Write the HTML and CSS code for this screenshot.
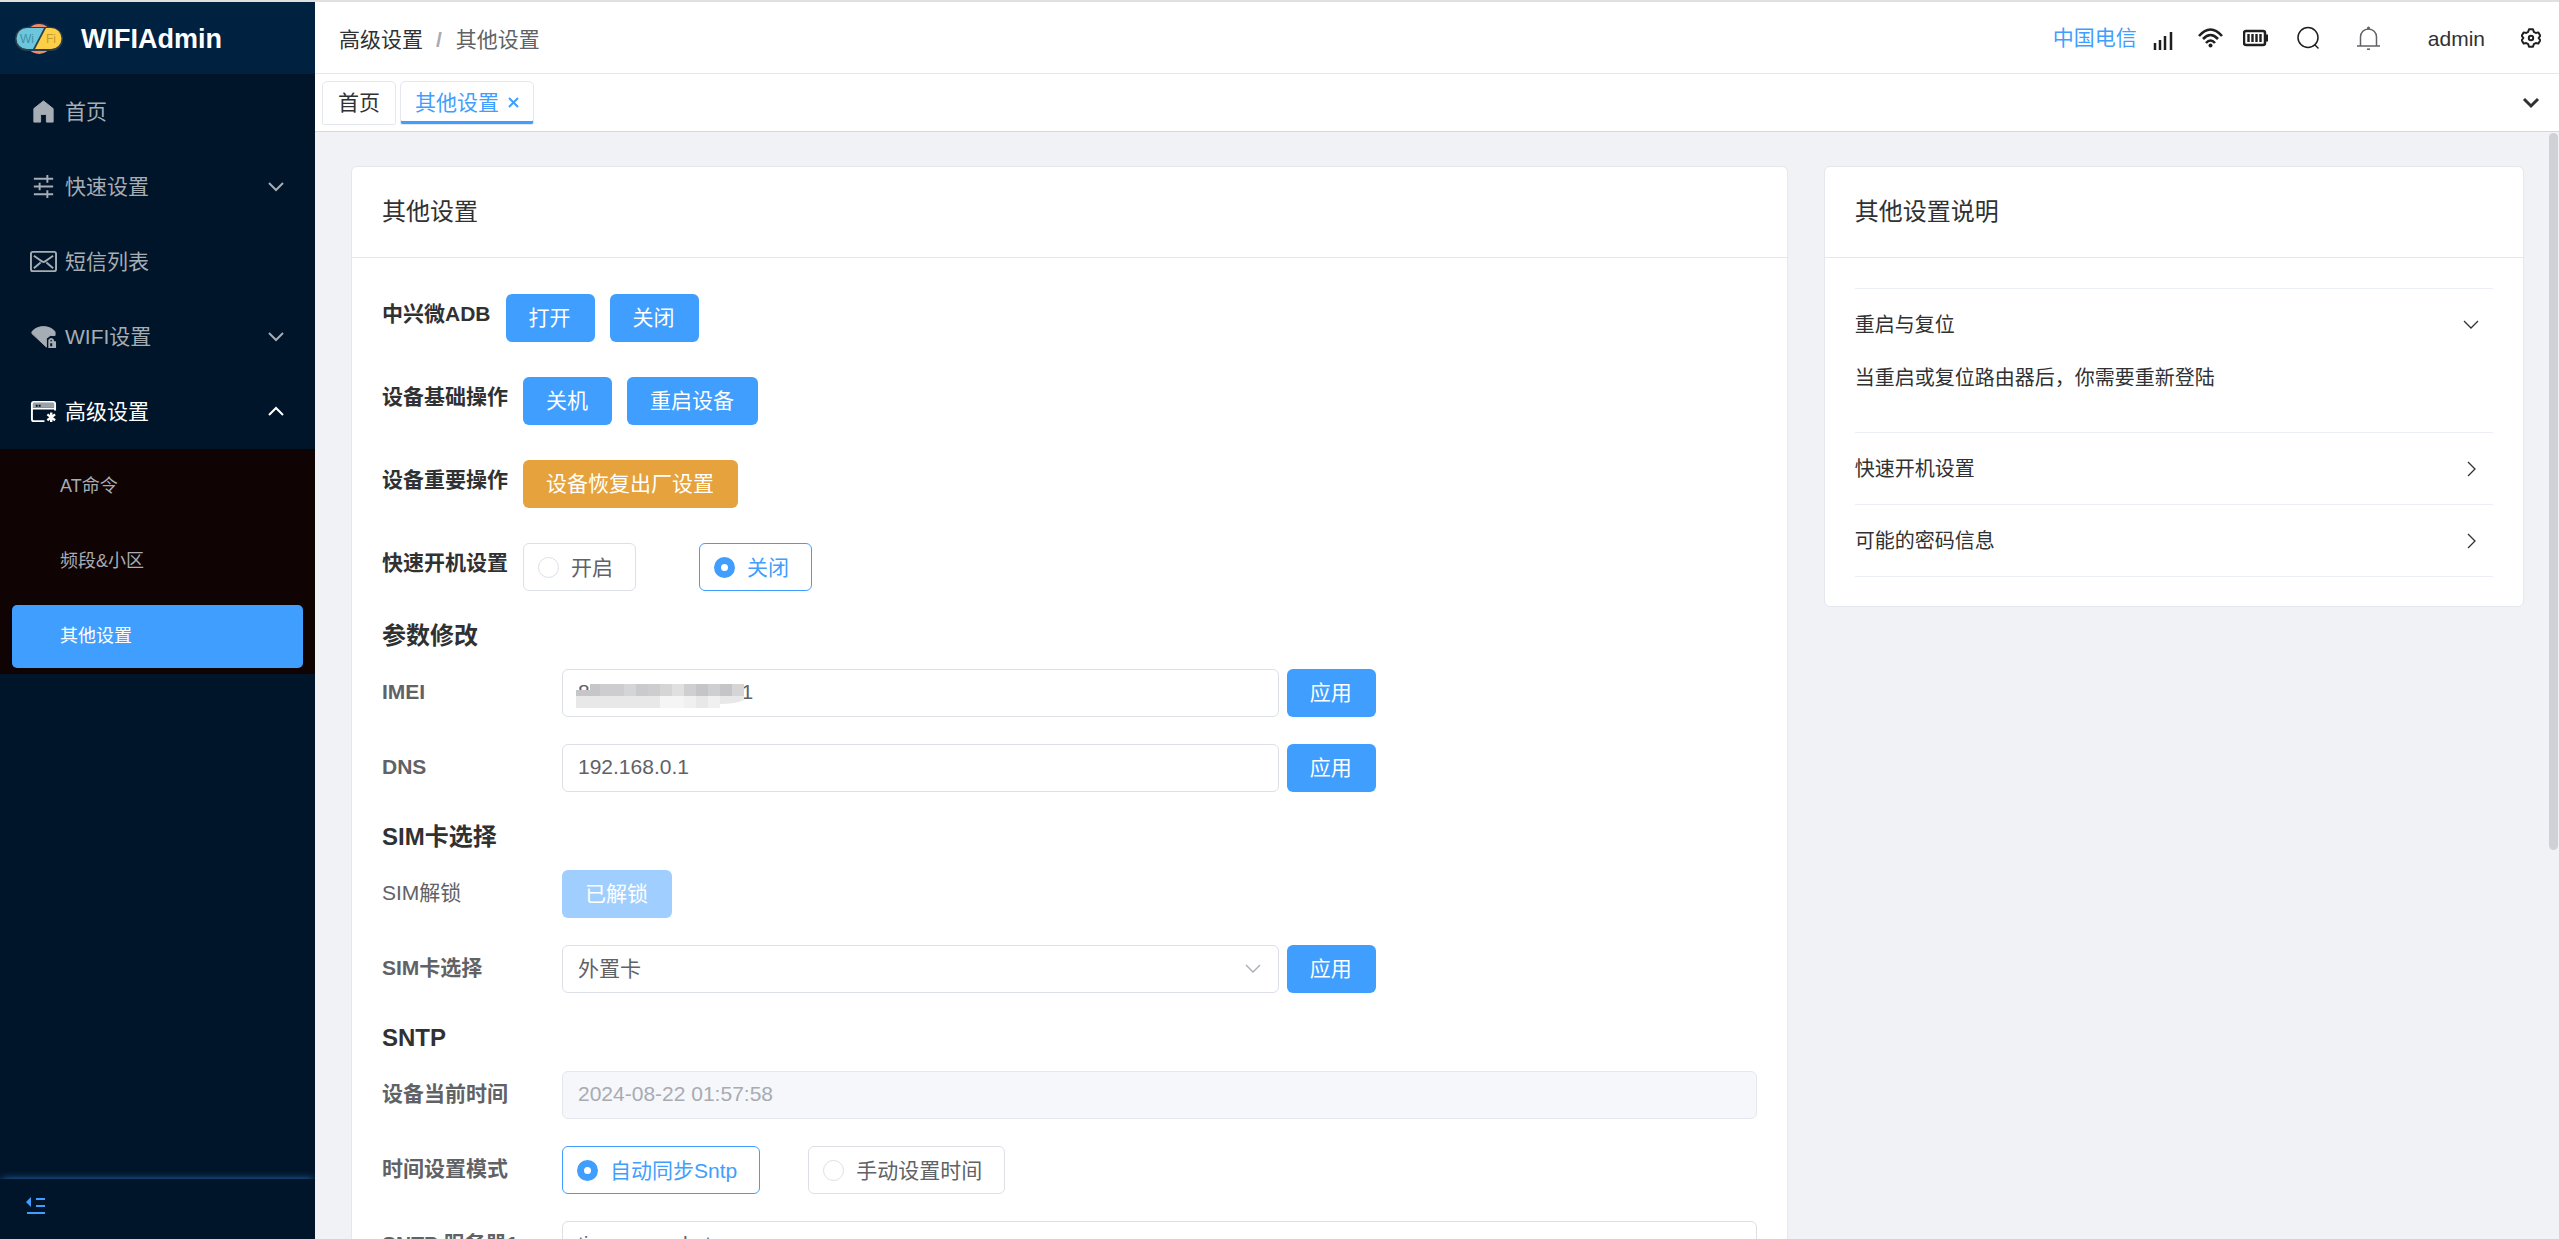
FILE: index.html
```html
<!DOCTYPE html>
<html lang="zh-CN">
<head>
<meta charset="utf-8">
<meta name="viewport" content="width=device-width, initial-scale=1">
<title>其他设置 - WIFIAdmin</title>
<link rel="stylesheet" href="styles.css">
</head>
<body>
<div class="app">
  <aside class="sidebar">
    <a class="brand" href="#">
      <svg class="brand-logo" viewBox="0 0 48 36" aria-hidden="true">
        <path d="M13 8C18 2 30 2 35 8" fill="none" stroke="#0d2f52" stroke-width="2"/>
        <ellipse cx="24" cy="19" rx="14" ry="15" fill="#f08a68"/>
        <rect x="0" y="7" width="48" height="24" rx="12" fill="#2b3f4d"/>
        <path d="M12 8h17L18 29h-6a10.500 10.500 0 0 1 0-21z" fill="#6cc7dd"/>
        <path d="M31 8h5a10.500 10.500 0 0 1 0 21H20z" fill="#fccf47"/>
        <text x="5" y="23" class="logo-wi">Wi</text>
        <text x="31" y="23" class="logo-fi">Fi</text>
      </svg>
      <span class="brand-name">WIFIAdmin</span>
    </a>
    <nav class="menu">
      <a class="menu-item" href="#">
        <svg class="menu-icon" viewBox="0 0 28 28" aria-hidden="true"><path d="M14 3 4 11v14h7v-8h6v8h7V11z" fill="currentColor" stroke="currentColor" stroke-linejoin="round"/></svg>
        <span class="menu-text">首页</span>
      </a>
      <a class="menu-item" href="#">
        <svg class="menu-icon" viewBox="0 0 28 28" aria-hidden="true"><path d="M4 6h20M4 14h20M4 22h20M18 2v8M10 10v8M18 18v8" fill="none" stroke="currentColor" stroke-width="2"/></svg>
        <span class="menu-text">快速设置</span>
        <svg class="menu-arrow" viewBox="0 0 16 16" aria-hidden="true"><path d="m1 4 7 7 7-7"/></svg>
      </a>
      <a class="menu-item" href="#">
        <svg class="menu-icon" viewBox="0 0 28 28" aria-hidden="true"><rect x="1" y="4" width="26" height="20" rx="2" fill="none" stroke="currentColor" stroke-width="2"/><path d="m4 8 7 5q3 3 6 0l7-5M4 21l7-6M24 21l-7-6" fill="none" stroke="currentColor" stroke-width="2"/></svg>
        <span class="menu-text">短信列表</span>
      </a>
      <a class="menu-item" href="#">
        <svg class="menu-icon" viewBox="0 0 28 28" aria-hidden="true"><path d="M2 9C8 2 20 2 26 9v4h-5l-4 3v9L2 11z" fill="currentColor" stroke="currentColor" stroke-linejoin="round"/><path d="M20 20h6v5h-6zM20 20v-2q2-3 4 0v7" fill="none" stroke="currentColor" stroke-width="2"/></svg>
        <span class="menu-text">WIFI设置</span>
        <svg class="menu-arrow" viewBox="0 0 16 16" aria-hidden="true"><path d="m1 4 7 7 7-7"/></svg>
      </a>
      <a class="menu-item menu-item-open" href="#">
        <svg class="menu-icon" viewBox="0 0 28 28" aria-hidden="true"><path d="M3 5h22v5H3z" fill="currentColor" opacity=".6"/><path d="M15 24H4q-2 0-2-2V6q0-2 2-2h20q2 0 2 2v7M2 11h24" fill="none" stroke="currentColor" stroke-width="2"/><path d="M6 8h2M9 8h2" stroke="#001529" stroke-width="2"/><path d="M22 15v10M18 17l8 6M26 17l-8 6" stroke="currentColor" stroke-width="2.500"/></svg>
        <span class="menu-text">高级设置</span>
        <svg class="menu-arrow" viewBox="0 0 16 16" aria-hidden="true"><path d="m1 11 7-7 7 7"/></svg>
      </a>
      <div class="submenu">
        <a class="submenu-item" href="#">AT命令</a>
        <a class="submenu-item" href="#">频段&amp;小区</a>
        <a class="submenu-item submenu-item-active" href="#">其他设置</a>
      </div>
    </nav>
    <div class="sidebar-footer">
      <button class="icon-button" type="button" aria-label="折叠菜单">
        <svg class="collapse-icon" viewBox="0 0 20 18" aria-hidden="true"><path d="M10 2h9M10 9h9M1 16h18" stroke="currentColor" stroke-width="2"/><path d="M5 0v10L0 5z" fill="currentColor"/></svg>
      </button>
    </div>
  </aside>

  <div class="main">
    <header class="topbar">
      <nav class="breadcrumb">
        <a href="#">高级设置</a><span class="breadcrumb-separator">/</span><span>其他设置</span>
      </nav>
      <div class="tools">
        <a class="carrier" href="#">中国电信</a>
        <svg class="tool-icon signal" viewBox="0 0 25 24" aria-hidden="true"><path d="M4 24v-7M9 24V14M14 24V10M20 24V6" stroke="currentColor" stroke-width="2.500"/></svg>
        <svg class="tool-icon wifi" viewBox="0 0 25 24" aria-hidden="true"><path d="M1 10Q12.500-3 24 10M5 13q7.500-8 15 0M8 17q4.500-5 9 0" fill="none" stroke="currentColor" stroke-width="2.600"/><circle cx="12.500" cy="19.500" r="2" fill="currentColor"/></svg>
        <svg class="tool-icon battery" viewBox="0 0 25 24" aria-hidden="true"><rect x="1" y="5" width="21" height="14" rx="2" fill="none" stroke="currentColor" stroke-width="2.500"/><path d="M23 9h2v6h-2z" fill="currentColor" stroke="currentColor"/><path d="M5.500 8v8M9.500 8v8M13.500 8v8M17.500 8v8" stroke="currentColor" stroke-width="2.400"/></svg>
        <button class="icon-button search" type="button" aria-label="搜索">
          <svg class="tool-icon" viewBox="0 0 25 24" aria-hidden="true"><circle cx="12" cy="11.500" r="10" fill="none" stroke="currentColor" stroke-width="1.500"/><path d="m18.500 18.500 4 4" stroke="currentColor" stroke-width="1.500"/></svg>
        </button>
        <button class="icon-button bell" type="button" aria-label="通知">
          <svg class="tool-icon" viewBox="0 0 25 24" aria-hidden="true"><path d="M1 20h23M4.500 20v-9a8 8 0 0 1 16 0v9" fill="none" stroke="currentColor" stroke-width="1.500"/><circle cx="12.500" cy="2" r="1.500" fill="currentColor"/><path d="M11 23.200h3" stroke="currentColor" stroke-width="1.500"/></svg>
        </button>
        <a class="user" href="#">admin</a>
        <button class="icon-button" type="button" aria-label="设置">
          <svg class="gear-icon" viewBox="0 0 20 20" aria-hidden="true"><path d="M8 1.300h4l.8 2.500 2 1.200 2.600-.6 1.900 3.400-1.700 2.200 1.700 2.200-1.900 3.400-2.600-.6-2 1.200-.8 2.500H8l-.8-2.500-2-1.200-2.600.6-1.900-3.400L2.400 10 .7 7.800l1.900-3.400 2.600.6 2-1.200z" fill="none" stroke="currentColor" stroke-width="2" stroke-linejoin="round"/><circle cx="10" cy="10" r="2.200" fill="none" stroke="currentColor" stroke-width="2"/></svg>
        </button>
      </div>
    </header>

    <div class="tabbar">
      <nav class="tabs">
        <a class="tab" href="#"><span class="tab-text">首页</span></a>
        <a class="tab tab-active" href="#"><span class="tab-text">其他设置</span>
          <svg class="tab-close" viewBox="0 0 13 13" aria-hidden="true"><path d="m2 2 9 9M11 2l-9 9"/></svg>
        </a>
      </nav>
      <button class="icon-button" type="button" aria-label="更多标签">
        <svg class="tabs-more" viewBox="0 0 20 20" aria-hidden="true"><path d="m3 6 7 7 7-7"/></svg>
      </button>
    </div>

    <main class="content">
      <div class="columns">
        <div class="column">
          <section class="card">
            <h1 class="card-title">其他设置</h1>
            <div class="card-body">
              <div class="quick-rows">
                <div class="quick-row">
                  <span class="quick-label">中兴微ADB</span>
                  <button class="button" type="button">打开</button>
                  <button class="button" type="button">关闭</button>
                </div>
                <div class="quick-row">
                  <span class="quick-label">设备基础操作</span>
                  <button class="button" type="button">关机</button>
                  <button class="button" type="button">重启设备</button>
                </div>
                <div class="quick-row">
                  <span class="quick-label">设备重要操作</span>
                  <button class="button button-warning" type="button">设备恢复出厂设置</button>
                </div>
                <div class="quick-row">
                  <span class="quick-label">快速开机设置</span>
                  <div class="radio-group radio-group-wide">
                    <label class="radio"><input type="radio" name="fastboot"><span class="radio-text">开启</span></label>
                    <label class="radio"><input type="radio" name="fastboot" checked><span class="radio-text">关闭</span></label>
                  </div>
                </div>
              </div>

              <h2 class="section-title">参数修改</h2>
              <div class="form-rows">
                <div class="form-row">
                  <label class="form-label" for="imei">IMEI</label>
                  <div class="form-control">
                    <div class="input-masked">
                      <input class="input" id="imei" type="text" value="800000000000001">
                      <svg class="mask" viewBox="0 0 168 24" aria-hidden="true">
                        <path d="M0 6h14V0h154v16q-8 4-24 4v4H0z" fill="#e8e8e9"/>
                        <path d="M0 6h14V0h10v12H0z" fill="#c6c6c8"/>
                        <path d="M24 0h24v12H24zM72 0h24v12H72z" fill="#cdcdcf"/>
                        <path d="M48 0h12v12H48z" fill="#d4d5d7"/>
                        <path d="M60 0h12v12H60z" fill="#cacacc"/>
                        <path d="M84 0h12v12H84zM156 0h12v12h-12z" fill="#d5d5d6"/>
                        <path d="M96 0h12v12H96z" fill="#e0e0e1"/>
                        <path d="M108 0h12v12h-12zM132 0h12v12h-12z" fill="#cecfd1"/>
                        <path d="M120 0h12v12h-12zM144 0h12v12h-12z" fill="#c5c5c7"/>
                        <path d="M84 12h24v12H84z" fill="#f5f5f5"/>
                        <path d="M108 12h12v12h-12zM132 12h12v12h-12z" fill="#f0f0f0"/>
                      </svg>
                    </div>
                    <button class="button" type="button">应用</button>
                  </div>
                </div>
                <div class="form-row">
                  <label class="form-label" for="dns">DNS</label>
                  <div class="form-control">
                    <input class="input input-part" id="dns" type="text" value="192.168.0.1">
                    <button class="button" type="button">应用</button>
                  </div>
                </div>
              </div>

              <h2 class="section-title">SIM卡选择</h2>
              <div class="form-rows">
                <div class="form-row">
                  <span class="form-label form-label-light">SIM解锁</span>
                  <div class="form-control"><button class="button" type="button" disabled>已解锁</button></div>
                </div>
                <div class="form-row">
                  <label class="form-label" for="sim">SIM卡选择</label>
                  <div class="form-control">
                    <div class="select-wrap">
                      <select class="input" id="sim"><option>外置卡</option><option>内置卡</option></select>
                      <svg class="select-arrow" viewBox="0 0 20 20" aria-hidden="true"><path d="m3 6 7 7 7-7"/></svg>
                    </div>
                    <button class="button" type="button">应用</button>
                  </div>
                </div>
              </div>

              <h2 class="section-title">SNTP</h2>
              <div class="form-rows">
                <div class="form-row">
                  <label class="form-label" for="now">设备当前时间</label>
                  <div class="form-control"><input class="input" id="now" type="text" value="2024-08-22 01:57:58" disabled></div>
                </div>
                <div class="form-row">
                  <span class="form-label">时间设置模式</span>
                  <div class="form-control radio-group">
                    <label class="radio"><input type="radio" name="timemode" checked><span class="radio-text">自动同步Sntp</span></label>
                    <label class="radio"><input type="radio" name="timemode"><span class="radio-text">手动设置时间</span></label>
                  </div>
                </div>
                <div class="form-row">
                  <label class="form-label" for="sntp1">SNTP 服务器1</label>
                  <div class="form-control"><input class="input" id="sntp1" type="text" value="time.neu.edu.tw"></div>
                </div>
              </div>
            </div>
          </section>
        </div>

        <div class="column">
          <section class="card">
            <h2 class="card-title">其他设置说明</h2>
            <div class="help">
              <div class="help-item">
                <button class="help-header" type="button" aria-expanded="true"><span class="help-title">重启与复位</span>
                  <svg class="help-arrow" viewBox="0 0 20 20" aria-hidden="true"><path d="m3 6 7 7 7-7"/></svg>
                </button>
                <p class="help-text">当重启或复位路由器后，你需要重新登陆</p>
              </div>
              <div class="help-item">
                <button class="help-header" type="button" aria-expanded="false"><span class="help-title">快速开机设置</span>
                  <svg class="help-arrow" viewBox="0 0 20 20" aria-hidden="true"><path d="m7 3 7 7-7 7"/></svg>
                </button>
              </div>
              <div class="help-item">
                <button class="help-header" type="button" aria-expanded="false"><span class="help-title">可能的密码信息</span>
                  <svg class="help-arrow" viewBox="0 0 20 20" aria-hidden="true"><path d="m7 3 7 7-7 7"/></svg>
                </button>
              </div>
            </div>
          </section>
        </div>
      </div>
    </main>
    <div class="scroll-thumb"></div>
  </div>
</div>
</body>
</html>
```
FILE: styles.css
```css
:root {
  --primary: #409eff;
  --text: #303133;
  --text-regular: #606266;
  --border: #dcdfe6;
  --border-light: #e4e7ed;
}

* { box-sizing: border-box; }

body {
  margin: 0;
  font-family: "Liberation Sans", "Noto Sans CJK SC", sans-serif;
  font-size: 21px;
  color: var(--text);
}

a { color: inherit; text-decoration: none; }

button, input, select { font: inherit; }

.icon-button {
  display: flex;
  padding: 0;
  border: 0;
  background: none;
  color: inherit;
  cursor: pointer;
}

.app {
  display: flex;
  height: 100vh;
  overflow: hidden;
  border-top: 2px solid #e0e0e0;
}

/* Sidebar */
.sidebar {
  display: flex;
  flex-direction: column;
  flex: none;
  width: 315px;
  background: #001529;
  color: #a6adb4;
}

.brand {
  display: flex;
  align-items: center;
  gap: 18px;
  height: 72px;
  padding-left: 15px;
  background: #002140;
  color: #fff;
  font-size: 27px;
  font-weight: 700;
}

.brand-logo { width: 48px; height: 36px; }
.brand-name { padding-top: 2px; }

.logo-wi, .logo-fi { font-size: 12px; font-weight: 400; }
.logo-wi { fill: #4391a5; }
.logo-fi { fill: #c29a2d; }

.menu { flex: 1; }

.menu-item {
  display: flex;
  align-items: center;
  gap: 8px;
  height: 75px;
  padding: 0 31px 0 30px;
}

.menu-item-open { color: #fff; }

/* CJK glyphs sit low in their line box; this centres them optically */
.menu-text, .tab-text, .radio-text, .help-title, .carrier { padding-bottom: 3px; }

.menu-icon { width: 27px; height: 27px; }

.menu-arrow { width: 16px; height: 16px; margin-left: auto; }

.menu-arrow path, .help-arrow path, .select-arrow path, .tabs-more path, .tab-close path {
  fill: none;
  stroke: currentColor;
  stroke-width: 2;
}

.submenu {
  padding-bottom: 6px;
  background: #100303;
  font-size: 18px;
}

.submenu-item {
  display: flex;
  align-items: center;
  height: 75px;
  padding: 0 0 6px 60px;
}

.submenu-item-active {
  height: 63px;
  margin: 6px 12px 0;
  padding-left: 48px;
  border-radius: 5px;
  background: var(--primary);
  color: #fff;
}

.sidebar-footer {
  display: flex;
  align-items: center;
  height: 60px;
  padding-left: 26px;
  box-shadow: 0 0 9px -2px var(--primary);
  background: #001529;
  color: var(--primary);
  clip-path: inset(-12px 0 0 0);
}

.collapse-icon { width: 20px; height: 18px; margin-bottom: 6px; }

/* Main area */
.main {
  position: relative;
  display: flex;
  flex-direction: column;
  flex: 1;
  min-width: 0;
  background: #f0f2f5;
}

.topbar {
  display: flex;
  align-items: center;
  justify-content: space-between;
  flex: none;
  height: 72px;
  padding: 0 18px 0 24px;
  border-bottom: 1px solid var(--border-light);
  background: #fff;
}

.breadcrumb { color: var(--text-regular); }
.breadcrumb a { color: var(--text); }
.breadcrumb-separator { margin: 0 14px 0 13px; color: #a8abb2; font-weight: 700; }

.tools { display: flex; align-items: center; color: #1f1f1f; }
.tool-icon { width: 25px; height: 24px; }
.carrier { color: var(--primary); }
.signal { margin: 0 22px 0 14px; }
.battery { margin: 0 28px 0 20px; }
.bell { margin: 0 47px 0 35px; color: var(--text-regular); }
.user { margin-right: 36px; padding-top: 2px; color: var(--text); }
.gear-icon, .tabs-more { width: 20px; height: 20px; }

.tabs-more path { stroke-width: 3; }

.tabbar {
  display: flex;
  align-items: center;
  justify-content: space-between;
  flex: none;
  height: 58px;
  padding: 0 18px 0 7px;
  border-bottom: 1px solid #d5d7dc;
  background: #fff;
}

.tabs { display: flex; gap: 4px; }

.tab {
  display: flex;
  align-items: center;
  gap: 8px;
  height: 44px;
  padding: 0 15px;
  border: 1px solid var(--border-light);
  border-radius: 5px 5px 2px 2px;
}

.tab-active {
  padding: 0 13px 0 14px;
  box-shadow: inset 0 -3px var(--primary);
  color: var(--primary);
}

.tab-close { width: 13px; height: 13px; }

.content {
  flex: 1;
  min-height: 0;
  padding: 34px 17px 34px 18px;
  overflow-y: auto;
  scrollbar-width: none;
}

.columns { display: grid; grid-template-columns: 2fr 1fr; align-items: start; }
.column { min-width: 0; padding: 0 18px; }

.scroll-thumb {
  position: absolute;
  top: 131px;
  right: 1px;
  width: 9px;
  height: 58%;
  border-radius: 5px;
  background: #d0d1d6;
}

.card {
  border: 1px solid var(--border-light);
  border-radius: 6px;
  background: #fff;
}

.card-title {
  margin: 0;
  padding: 27px 30px;
  border-bottom: 1px solid var(--border-light);
  font-size: 24px;
  font-weight: 400;
  line-height: 36px;
}

.card-body { padding: 36px 30px; }

.button {
  flex: none;
  height: 48px;
  padding: 0 24px 4px 23px;
  border: 0;
  border-radius: 6px;
  background: var(--primary);
  color: #fff;
  cursor: pointer;
}

.button-warning { background: #e6a23c; }
.button:disabled { background: #a0cfff; }

.quick-rows { display: flex; flex-direction: column; gap: 35px; }
.quick-row { display: flex; gap: 15px; }
.quick-label { font-weight: 700; line-height: 40px; }

.radio-group { display: flex; gap: 48px; }
.radio-group-wide { gap: 63px; }

.radio {
  display: flex;
  align-items: center;
  gap: 12px;
  height: 48px;
  padding: 0 22px 0 14px;
  border: 1px solid var(--border);
  border-radius: 6px;
  color: var(--text-regular);
}

.radio:has(input:checked) { border-color: var(--primary); color: var(--primary); }

.radio input {
  appearance: none;
  width: 21px;
  height: 21px;
  margin: 0;
  border: 1px solid var(--border);
  border-radius: 50%;
}

.radio input:checked { border: 7px solid var(--primary); }

.section-title {
  margin: 33px 0 21px;
  font-size: 24px;
  line-height: 24px;
}

.form-rows { display: flex; flex-direction: column; gap: 27px; }

.form-row {
  display: grid;
  grid-template-columns: 180px 1fr;
  align-items: center;
}

.form-label {
  padding-bottom: 2px;
  color: var(--text-regular);
  font-weight: 700;
  line-height: 24px;
}

.form-label-light { font-weight: 400; }
.form-control { display: flex; }

.input {
  width: 100%;
  height: 48px;
  padding: 0 15px 2px;
  border: 1px solid var(--border);
  border-radius: 6px;
  background: #fff;
  color: var(--text-regular);
}

.input:disabled {
  border-color: var(--border-light);
  background: #f5f7fa;
  color: #a8abb2;
}

select.input { appearance: none; }

.input-part, .input-masked, .select-wrap { width: 60%; margin-right: 8px; }
.input-masked, .select-wrap { position: relative; }

.mask {
  position: absolute;
  top: 15px;
  left: 14px;
  width: 168px;
  height: 24px;
}

.select-arrow {
  position: absolute;
  top: 14px;
  right: 16px;
  width: 20px;
  height: 20px;
  color: #a8abb2;
}

.select-arrow path { stroke-width: 1.3; }
.help-arrow path { stroke-width: 1.3; }

/* Help panel */
.help {
  margin: 30px 30px 29px;
  border-bottom: 1px solid #ebeef5;
  font-size: 20px;
}

.help-item { border-top: 1px solid #ebeef5; }

.help-header {
  display: flex;
  align-items: center;
  justify-content: space-between;
  width: 100%;
  height: 71px;
  padding: 0 12px 0 0;
  border: 0;
  background: none;
  color: var(--text);
  text-align: left;
  cursor: pointer;
}

.help-arrow { width: 20px; height: 20px; }

.help-text { margin: 0; padding-bottom: 36px; line-height: 36px; }
```
